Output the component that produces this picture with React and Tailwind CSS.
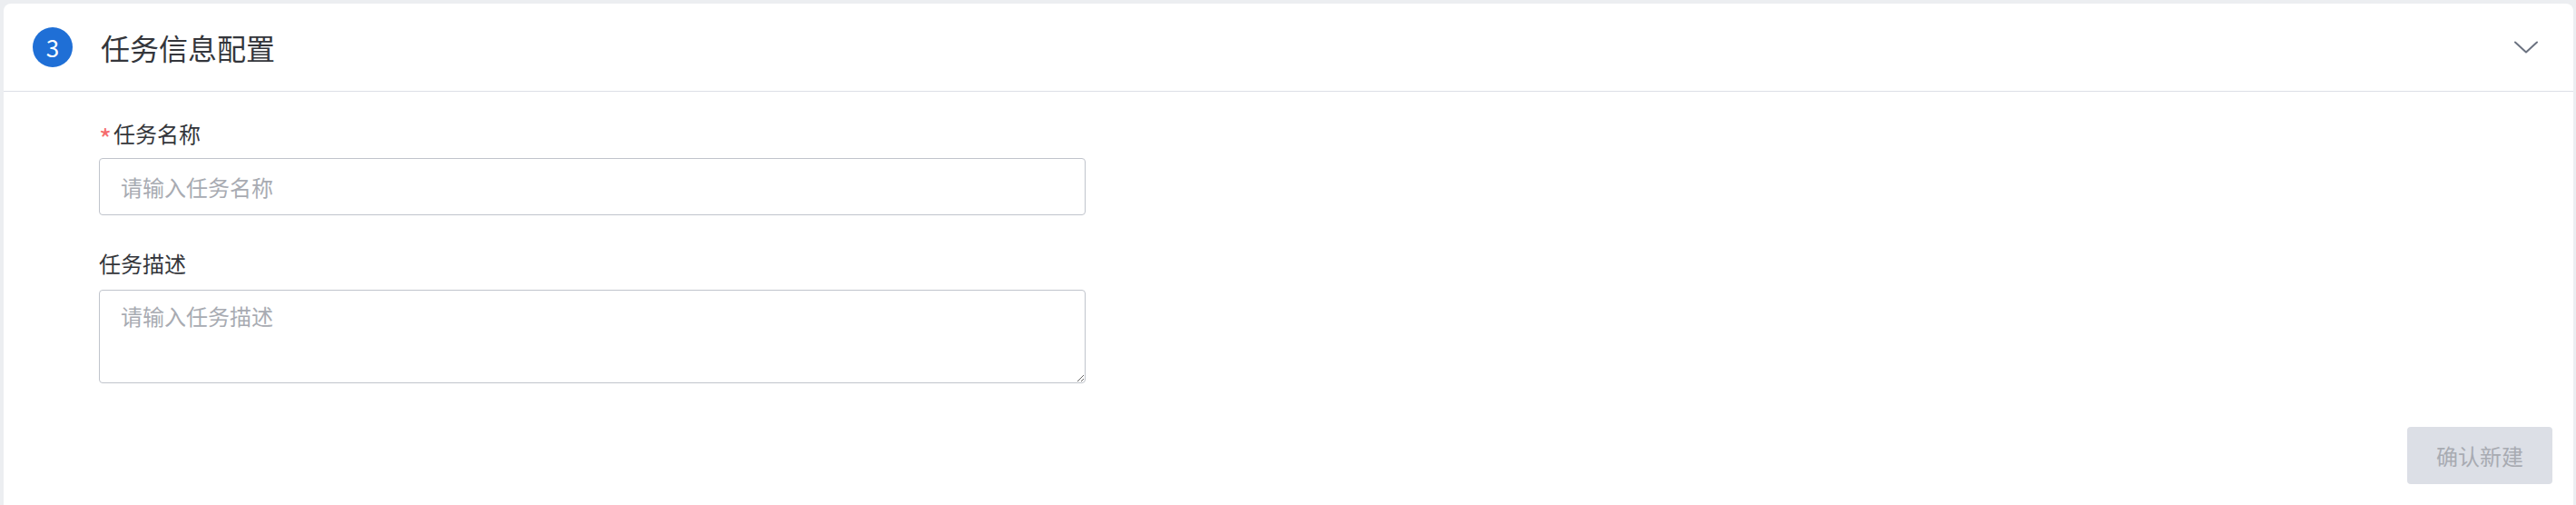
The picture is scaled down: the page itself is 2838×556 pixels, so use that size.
import React, { useState } from 'react';

const font = { fontFamily: '"Noto Sans CJK SC", "Noto Sans", sans-serif' };

const App = () => {
  const [name, setName] = useState('');
  const [desc, setDesc] = useState('');
  const [open, setOpen] = useState(true);

  return (
    <div className="h-[556px] bg-[#eceef1] pt-[4px] pl-[4px] pr-[3px] overflow-hidden" style={font}>
      <div className="h-full bg-white rounded-t-[8px] flex flex-col">
        {/* Header */}
        <div className="h-[97px] flex items-center pl-[32px] pr-[38px] border-b border-[#dcdfe6] shrink-0">
          <div className="w-[44px] h-[44px] rounded-full bg-[#1f6fd6] text-white text-[26px] flex items-center justify-center leading-none">
            3
          </div>
          <h2 className="ml-[31px] text-[32px] leading-none text-[#34363b] font-normal">任务信息配置</h2>
          <button
            type="button"
            onClick={() => setOpen(!open)}
            className="ml-auto w-[28px] h-[20px] flex items-center justify-center"
          >
            <svg width="26" height="14" viewBox="0 0 26 14" fill="none">
              <path d="M1 1.5 L13 12.5 L25 1.5" stroke="#6b7280" strokeWidth="2" strokeLinecap="round" strokeLinejoin="round" />
            </svg>
          </button>
        </div>

        {/* Body */}
        <div className="flex-1 flex flex-col pl-[105px] pr-[23px] pt-[30px]">
          <label className="flex h-[32px] text-[24px] leading-[32px] text-[#34363b]">
            <span className="text-[#f56c6c] text-[30px] leading-[32px] h-[32px] w-[16px] relative top-[5px]">*</span>
            任务名称
          </label>
          <input
            value={name}
            onChange={(e) => setName(e.target.value)}
            placeholder="请输入任务名称"
            className="mt-[11px] w-[1087px] h-[63px] border border-[#c0c4cc] rounded-[4px] px-[23px] text-[24px] text-[#303133] placeholder:text-[#a8abb2] outline-none"
            style={font}
          />

          <label className="mt-[37px] text-[24px] leading-[32px] text-[#34363b]">任务描述</label>
          <textarea
            value={desc}
            onChange={(e) => setDesc(e.target.value)}
            placeholder="请输入任务描述"
            className="mt-[13px] w-[1087px] h-[103px] border border-[#c0c4cc] rounded-[4px] px-[23px] pt-[12px] text-[24px] leading-[32px] text-[#303133] placeholder:text-[#a8abb2] outline-none"
            style={font}
          />

          <div className="flex justify-end mt-[48px]">
            <button
              type="button"
              disabled
              className="w-[160px] h-[63px] rounded-[4px] bg-[#dcdfe6] text-[#a8abb2] text-[24px] cursor-not-allowed"
              style={font}
            >
              确认新建
            </button>
          </div>
        </div>
      </div>
    </div>
  );
};

export default App;
